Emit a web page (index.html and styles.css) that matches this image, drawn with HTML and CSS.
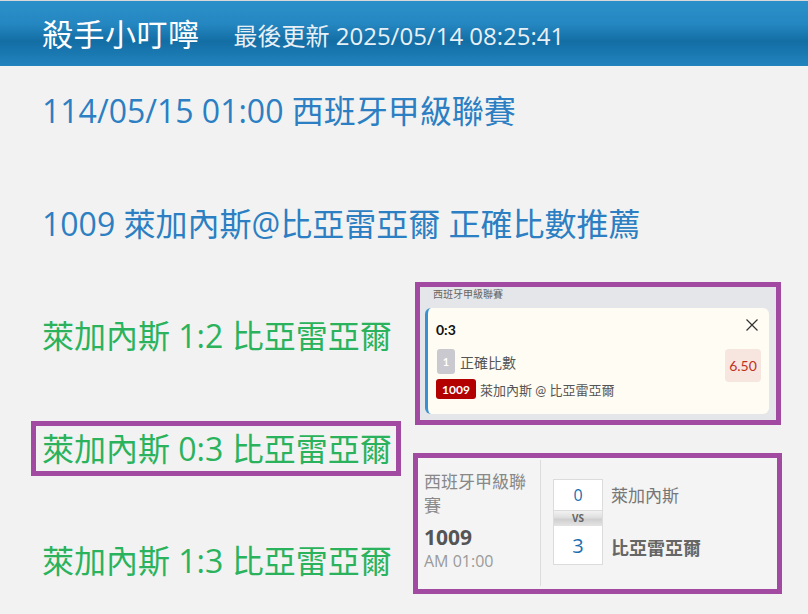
FILE: index.html
```
<!DOCTYPE html>
<html lang="zh-Hant">
<head>
<meta charset="utf-8">
<title>殺手小叮嚀</title>
<link rel="stylesheet" href="styles.css">
</head>
<body>
<header class="topbar">
  <h1 class="brand">殺手小叮嚀</h1>
  <span class="updated">最後更新 2025/05/14 08:25:41</span>
</header>
<main class="page">
  <section class="picks">
    <p class="line blue">114/05/15 01:00 西班牙甲級聯賽</p>
    <p class="line blue">1009 萊加內斯@比亞雷亞爾 正確比數推薦</p>
    <p class="line green">萊加內斯 1:2 比亞雷亞爾</p>
    <p class="line green"><span class="boxed">萊加內斯 0:3 比亞雷亞爾</span></p>
    <p class="line green">萊加內斯 1:3 比亞雷亞爾</p>
  </section>
  <aside class="shots">
    <div class="slip frame">
      <div class="slip-league">西班牙甲級聯賽</div>
      <div class="slip-card">
        <div class="slip-top">
          <span class="slip-score">0:3</span>
          <svg class="slip-close" width="12" height="12" viewBox="0 0 12 12"><path d="M0.5 0.5 L11.5 11.5 M11.5 0.5 L0.5 11.5" stroke="#333" stroke-width="1.2" fill="none"/></svg>
        </div>
        <div class="slip-body">
          <div class="slip-info">
            <div class="slip-market"><span class="slip-num">1</span><span class="slip-mtext">正確比數</span></div>
            <div class="slip-match"><span class="slip-code">1009</span><span class="slip-teams">萊加內斯 @ 比亞雷亞爾</span></div>
          </div>
          <div class="slip-odds">6.50</div>
        </div>
      </div>
    </div>
    <div class="result frame">
      <div class="result-meta">
        <div class="result-league">西班牙甲級聯賽</div>
        <div class="result-code">1009</div>
        <div class="result-time">AM 01:00</div>
      </div>
      <div class="result-score">
        <div class="score-col">
          <div class="score-box s-home">0</div>
          <div class="score-vs">VS</div>
          <div class="score-box s-away">3</div>
        </div>
        <div class="team-col">
          <div class="team home">萊加內斯</div>
          <div class="team away">比亞雷亞爾</div>
        </div>
      </div>
    </div>
  </aside>
</main>
</body>
</html>
```
FILE: styles.css
```
* { box-sizing: border-box; }
html, body { margin: 0; padding: 0; }
body {
  background: #f2f2f2;
  font-family: "Open Sans", "Noto Sans CJK TC", sans-serif;
  width: 808px;
  height: 614px;
  overflow: hidden;
}
.topbar {
  height: 66px;
  border-top: 1px solid #d9d9d9;
  background: linear-gradient(to bottom, #2b90c9 0%, #2587c1 35%, #136ea4 62%, #1a78b1 80%, #2284bd 100%);
  display: flex;
  align-items: center;
  padding-left: 42px;
  color: #fff;
}
.brand {
  margin: 0;
  font-weight: 400;
  font-size: 31px;
  line-height: 40px;
  letter-spacing: 0.5px;
}
.updated {
  margin-left: 34px;
  font-size: 24px;
  color: #e8f0f7;
  margin-top: 2px;
}
.page {
  display: flex;
  align-items: flex-start;
}
.picks {
  width: 415px;
  flex: none;
  padding: 22px 0 0 42px;
}
.line {
  margin: 0 0 67.5px 0;
  font-size: 32px;
  line-height: 45px;
  white-space: nowrap;
}
.line:last-child { margin-bottom: 0; }
.blue { color: #2b7fc2; }
.green { color: #2bb25c; }
.boxed {
  display: inline-block;
  border: 5px solid #a24aa2;
  margin: -5px 0 -5px -11px;
  padding: 0 4px 0 6px;
  line-height: 45px;
}
.shots {
  padding-top: 216px;
  display: flex;
  flex-direction: column;
}
.frame { border: 5px solid #a24aa2; }
.slip {
  width: 366px;
  height: 143px;
  background: #e5e6e9;
  padding: 0 7px 6px 5px;
  display: flex;
  flex-direction: column;
  font-family: "Lato", "Noto Sans CJK TC", sans-serif;
}
.slip-league {
  font-size: 10px;
  line-height: 14px;
  color: #666;
  padding-left: 8px;
  margin-bottom: 7px;
  font-family: "Noto Sans CJK TC", sans-serif;
}
.slip-card {
  flex: 1;
  background: #fffcf3;
  border-left: 3px solid #3a91d2;
  border-radius: 6px;
  padding: 9px 8px 0 8px;
}
.slip-top {
  display: flex;
  justify-content: space-between;
  align-items: flex-start;
  height: 32px;
}
.slip-score {
  font-weight: 700;
  font-size: 14px;
  line-height: 26px;
  color: #111;
}
.slip-close { margin: 2px 3px 0 0; }
.slip-body {
  display: flex;
  justify-content: space-between;
  align-items: flex-start;
}
.slip-market {
  display: flex;
  align-items: center;
  height: 25px;
}
.slip-num {
  width: 18px;
  height: 25px;
  margin-left: 1px;
  border-radius: 3px;
  background: #c9c9cf;
  color: #fff;
  font-weight: 700;
  font-size: 11px;
  display: flex;
  align-items: center;
  justify-content: center;
}
.slip-mtext {
  margin-left: 5px;
  font-size: 14px;
  color: #555;
}
.slip-match {
  display: flex;
  align-items: center;
  margin-top: 5px;
}
.slip-code {
  width: 40px;
  height: 20px;
  border-radius: 3px;
  background: #b30000;
  color: #fff;
  font-weight: 700;
  font-size: 12px;
  display: flex;
  align-items: center;
  justify-content: center;
}
.slip-teams {
  margin-left: 4px;
  font-size: 13px;
  color: #555;
}
.slip-odds {
  width: 36px;
  height: 33px;
  border-radius: 4px;
  background: #f7e6e0;
  color: #c0301c;
  font-size: 14px;
  display: flex;
  align-items: center;
  justify-content: center;
}
.result {
  margin-top: 28px;
  margin-left: -2px;
  width: 369px;
  height: 141px;
  background: #f4f4f4;
  display: flex;
  font-family: "Open Sans", "Noto Sans CJK TC", sans-serif;
}
.result-meta {
  width: 123px;
  flex: none;
  padding: 9px 6px 0 6px;
  border-right: 1px solid #dcdcdc;
  margin: 2px 0 3px 0;
}
.result-league {
  font-family: "Noto Sans CJK TC", sans-serif;
  font-size: 17px;
  line-height: 24px;
  color: #888;
}
.result-code {
  font-size: 21px;
  font-weight: 700;
  color: #555;
  line-height: 28px;
  margin-top: 6px;
}
.result-time {
  font-size: 16px;
  color: #9a9a9a;
  line-height: 20px;
}
.result-score {
  display: flex;
  padding: 21px 0 0 12px;
}
.score-col {
  width: 50px;
  display: flex;
  flex-direction: column;
}
.score-box {
  background: #fff;
  border: 1px solid #dcdcdc;
  color: #1b6fb0;
  display: flex;
  align-items: center;
  justify-content: center;
}
.s-home { height: 32px; font-size: 16px; }
.s-away { height: 39px; font-size: 20px; border-top: none; }
.score-vs {
  height: 15px;
  background: linear-gradient(to bottom, #f2f2f2 0%, #dedede 45%, #cfcfcf 55%, #e4e4e4 100%);
  border-left: 1px solid #dcdcdc;
  border-right: 1px solid #dcdcdc;
  font-size: 10px;
  font-weight: 700;
  color: #666;
  line-height: 15px;
  text-align: center;
}
.team-col {
  padding-left: 8px;
  display: flex;
  flex-direction: column;
}
.team {
  font-family: "Noto Sans CJK TC", sans-serif;
  color: #777;
}
.home { font-size: 17px; line-height: 32px; }
.away { font-size: 18px; font-weight: 700; color: #666; line-height: 24px; margin-top: 24px; }
```
